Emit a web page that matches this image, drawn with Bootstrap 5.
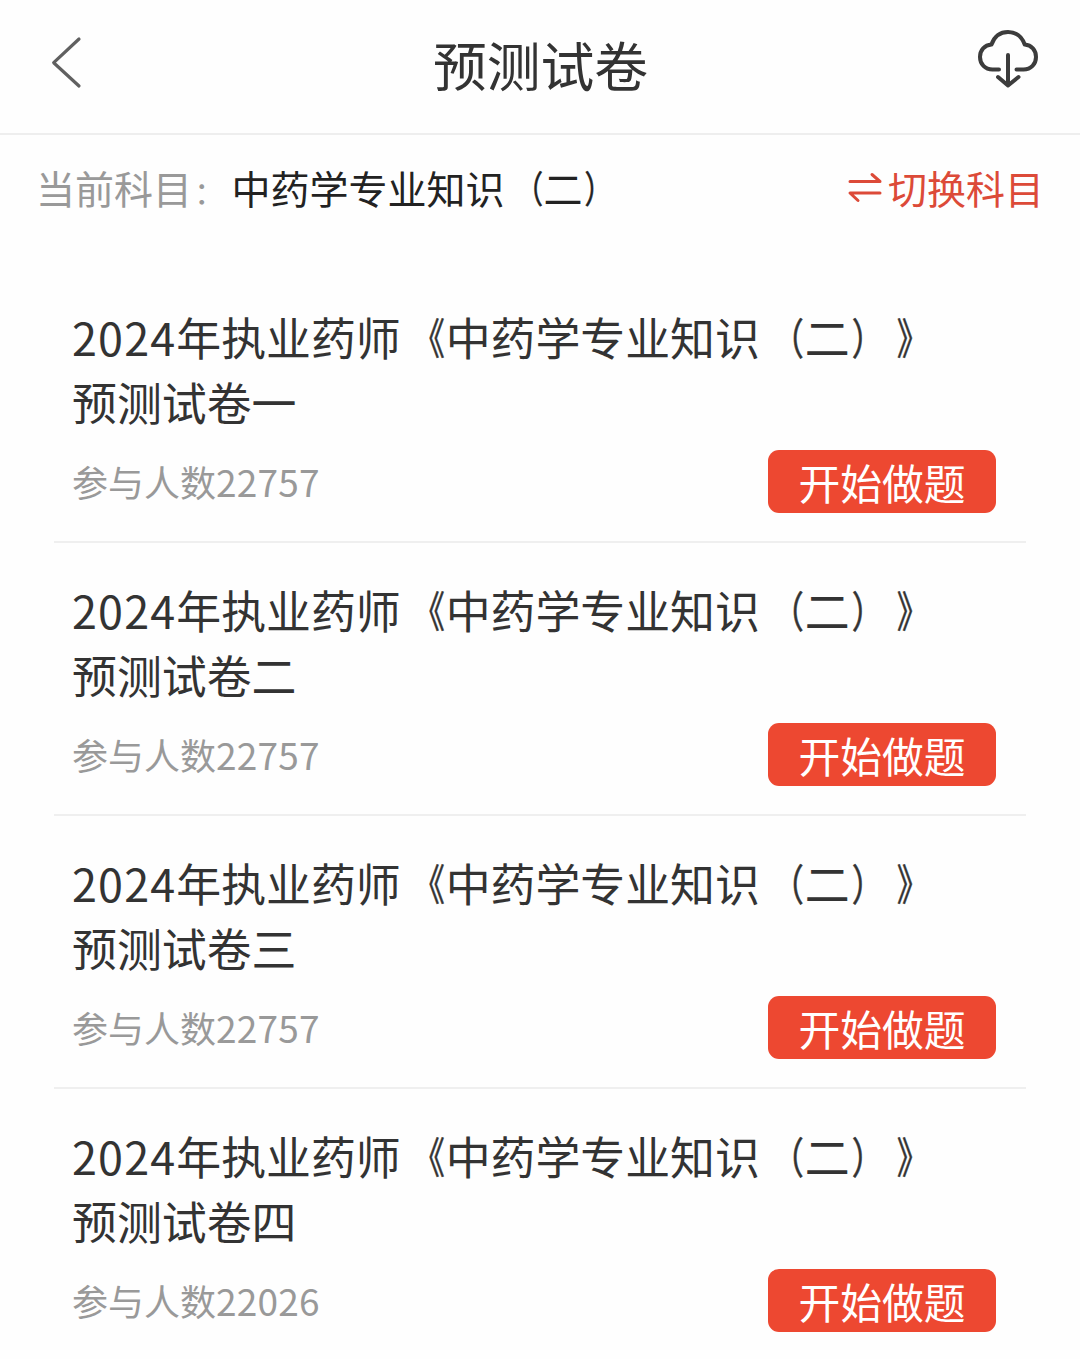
<!DOCTYPE html>
<html lang="zh-CN">
<head>
<meta charset="utf-8">
<meta name="viewport" content="width=device-width, initial-scale=1">
<title>预测试卷</title>
<link href="https://cdn.jsdelivr.net/npm/bootstrap@5.3.0/dist/css/bootstrap.min.css" rel="stylesheet">
<style>
body{font-family:"Noto Sans CJK SC",sans-serif;background:#fefefe;color:#333;overflow:hidden;text-spacing-trim:space-all;font-kerning:none}
.topbar{height:135px;border-bottom:2px solid #eee;padding:0 41px 0 50px}
.topbar svg{display:block}
.page-title{font-size:53.8px;line-height:64px;font-weight:400;margin:0 0 5px}
.side-slot{width:64px;margin-bottom:10px}
.side-end{width:62px;margin-bottom:16px}
.title-slot{padding-right:10px}
.subject{height:111px;padding:0 36px 8px 36px;font-size:39px;line-height:56px}
.subject-label{color:#999}
.subject-name{color:#222}
.colon{display:inline-block;width:39.5px;font-size:31px;line-height:1;padding-left:2px}
.open-mark,.close-mark{display:inline-block;-webkit-text-stroke:.6px currentColor;transform:scale(.72,.95);transform-origin:92% 55%}
.close-mark{transform-origin:14% 55%}
.switch-link{color:#dc4a38}
.papers{padding:24px 54px 0}
.paper{height:273px;padding:34px 30px 0 18px;border-bottom:2px solid #efefef}
.paper-title{font-size:44.9px;line-height:65px;font-weight:400;margin:0 0 16px}
.num{letter-spacing:1.15px}
.meta{font-size:36px;line-height:52px;color:#999;padding-bottom:1px}
.meta .num{font-size:37px;letter-spacing:.2px}
.btn-start,.btn-start:hover{background:#ed4831;color:#fff;width:228px;height:63px;border:0;border-radius:11px;font-size:41.8px;line-height:62px;padding:1px 0 0}
</style>
</head>
<body>
<header class="topbar d-flex justify-content-between align-items-center">
  <div class="side-slot">
    <svg width="34" height="56" viewBox="0 0 34 56" fill="none" stroke="#606060" stroke-width="3.2" stroke-linecap="round" stroke-linejoin="round"><path d="M29 5 3.7 28.7 29 52"/></svg>
  </div>
  <div class="title-slot"><h1 class="page-title">预测试卷</h1></div>
  <div class="side-end">
    <svg width="62" height="64" viewBox="1 0 62 64" fill="none" stroke="#3c3c3c" stroke-width="4" stroke-linecap="round" stroke-linejoin="round"><path d="M23 42.500H16.500C9 42.500 4 37 4 30C4 23 8.500 18 15.500 17.500C18.500 9 25 5 32 5C39.500 5 45.500 9 48.700 17.500C55.500 18 60 23 60 30C60 37 55 42.500 47.500 42.500H40.500M32 28V58.500M22 50 32 58.500 42.500 50"/></svg>
  </div>
</header>
<section class="subject d-flex justify-content-between align-items-center">
  <div><span class="subject-label">当前科目<span class="colon">：</span></span><span class="subject-name">中药学专业知识<span class="open-mark">（</span>二<span class="close-mark">）</span></span></div>
  <a class="switch-link d-flex align-items-center text-decoration-none" href="#">
    <svg class="me-1" width="36" height="32" viewBox="0 0 36 32" fill="none" stroke="#dc4a38" stroke-width="3" stroke-linecap="round" stroke-linejoin="round"><path d="M2 10.500H32L24 3.500M32 22H2L10 29.500"/></svg>
    <span>切换科目</span>
  </a>
</section>
<main class="papers">
  <article class="paper">
    <h2 class="paper-title"><span class="num">2024</span>年执业药师<span class="open-mark">《</span>中药学专业知识<span class="open-mark">（</span>二<span class="close-mark">）</span><span class="close-mark">》</span><br>预测试卷一</h2>
    <div class="d-flex justify-content-between align-items-center">
      <div class="meta">参与人数<span class="num">22757</span></div><button class="btn btn-start" type="button">开始做题</button>
    </div>
  </article>
  <article class="paper">
    <h2 class="paper-title"><span class="num">2024</span>年执业药师<span class="open-mark">《</span>中药学专业知识<span class="open-mark">（</span>二<span class="close-mark">）</span><span class="close-mark">》</span><br>预测试卷二</h2>
    <div class="d-flex justify-content-between align-items-center">
      <div class="meta">参与人数<span class="num">22757</span></div><button class="btn btn-start" type="button">开始做题</button>
    </div>
  </article>
  <article class="paper">
    <h2 class="paper-title"><span class="num">2024</span>年执业药师<span class="open-mark">《</span>中药学专业知识<span class="open-mark">（</span>二<span class="close-mark">）</span><span class="close-mark">》</span><br>预测试卷三</h2>
    <div class="d-flex justify-content-between align-items-center">
      <div class="meta">参与人数<span class="num">22757</span></div><button class="btn btn-start" type="button">开始做题</button>
    </div>
  </article>
  <article class="paper">
    <h2 class="paper-title"><span class="num">2024</span>年执业药师<span class="open-mark">《</span>中药学专业知识<span class="open-mark">（</span>二<span class="close-mark">）</span><span class="close-mark">》</span><br>预测试卷四</h2>
    <div class="d-flex justify-content-between align-items-center">
      <div class="meta">参与人数<span class="num">22026</span></div><button class="btn btn-start" type="button">开始做题</button>
    </div>
  </article>
</main>
<script src="https://cdn.jsdelivr.net/npm/bootstrap@5.3.0/dist/js/bootstrap.bundle.min.js"></script>
</body>
</html>
